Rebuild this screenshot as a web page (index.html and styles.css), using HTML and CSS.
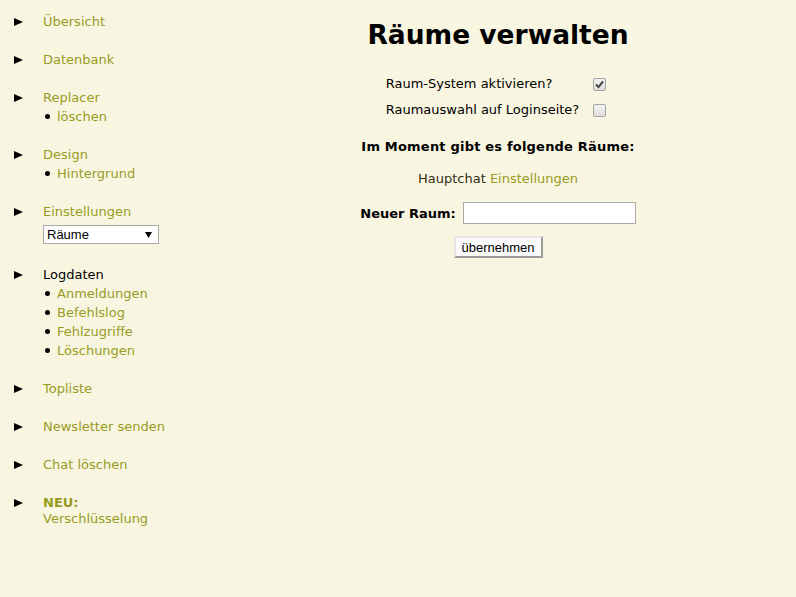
FILE: index.html
```html
<!DOCTYPE html>
<html lang="de">
<head>
    <meta charset="UTF-8">
    <title>Räume verwalten</title>
    <link rel="stylesheet" href="styles.css">
</head>
<body>
    <div class="layout">
        <ul class="nav">
            <li class="nav-item"><a href="#">Übersicht</a></li>
            <li class="nav-item"><a href="#">Datenbank</a></li>
            <li class="nav-item">
                <a href="#">Replacer</a>
                <ul class="sub">
                    <li><a href="#">löschen</a></li>
                </ul>
            </li>
            <li class="nav-item">
                <a href="#">Design</a>
                <ul class="sub">
                    <li><a href="#">Hintergrund</a></li>
                </ul>
            </li>
            <li class="nav-item">
                <a href="#">Einstellungen</a>
                <div class="nav-select">
                    <select>
                        <option>Räume</option>
                    </select>
                </div>
            </li>
            <li class="nav-item current">
                <span>Logdaten</span>
                <ul class="sub">
                    <li><a href="#">Anmeldungen</a></li>
                    <li><a href="#">Befehlslog</a></li>
                    <li><a href="#">Fehlzugriffe</a></li>
                    <li><a href="#">Löschungen</a></li>
                </ul>
            </li>
            <li class="nav-item"><a href="#">Topliste</a></li>
            <li class="nav-item"><a href="#">Newsletter senden</a></li>
            <li class="nav-item"><a href="#">Chat löschen</a></li>
            <li class="nav-item nav-item-new"><a href="#"><b>NEU:</b><br>Verschlüsselung</a></li>
        </ul>

        <div class="main">
            <h1>Räume verwalten</h1>

            <table class="options">
                <tr>
                    <td>Raum-System aktivieren?</td>
                    <td><input type="checkbox" checked></td>
                </tr>
                <tr>
                    <td>Raumauswahl auf Loginseite?</td>
                    <td><input type="checkbox"></td>
                </tr>
            </table>

            <p class="rooms-title">Im Moment gibt es folgende Räume:</p>
            <p class="rooms">Hauptchat <a href="#">Einstellungen</a></p>

            <form class="new-room">
                <div class="new-room-row">
                    <label for="raum">Neuer Raum:</label>
                    <input type="text" id="raum">
                </div>
                <button type="button">übernehmen</button>
            </form>
        </div>
    </div>
</body>
</html>
```

FILE: styles.css
```css
body {
    margin: 0;
    background: #f8f6e1;
    color: #000;
    font-family: "DejaVu Sans", Verdana, sans-serif;
    font-size: 13px;
}
a {
    color: #989b1f;
    text-decoration: none;
}
.layout {
    display: grid;
    grid-template-columns: 200px 1fr;
}

/* left menu */
.nav {
    list-style: none;
    margin: 0;
    padding: 12px 0 0 0;
    line-height: 19px;
}
.nav-item {
    position: relative;
    padding-left: 43px;
    margin-bottom: 19px;
}
.nav-item::before {
    content: "";
    position: absolute;
    left: 14px;
    top: 6px;
    border-left: 9px solid #000;
    border-top: 4px solid transparent;
    border-bottom: 4px solid transparent;
}
.nav-item.current > span {
    color: #000;
}
.nav-item-new {
    line-height: 16px;
    padding-top: 2px;
}
.nav-item-new::before {
    top: 6px;
}
.sub {
    list-style: none;
    margin: 0;
    padding: 0;
}
.sub li {
    position: relative;
    padding-left: 14px;
}
.sub li::before {
    content: "";
    position: absolute;
    left: 2px;
    top: 7px;
    width: 5px;
    height: 5px;
    border-radius: 50%;
    background: #000;
}
.nav-select {
    padding: 4px 0 2px 0;
    line-height: 0;
}
.nav-select select {
    appearance: none;
    -webkit-appearance: none;
    width: 116px;
    height: 19px;
    margin: 0;
    padding: 0 0 0 3px;
    border: 1px solid #a9a9a9;
    border-radius: 0;
    background: #fff url("data:image/svg+xml,%3Csvg xmlns='http://www.w3.org/2000/svg' width='7' height='6'%3E%3Cpath d='M0 0h7L3.5 6z' fill='%23000'/%3E%3C/svg%3E") no-repeat right 6px center;
    font-family: "Liberation Sans", Arial, sans-serif;
    font-size: 13px;
    color: #000;
}

/* content */
.main {
    text-align: center;
}
.main h1 {
    margin: 20px 0 20px 0;
    font-size: 26.5px;
    line-height: 30px;
}
.options {
    margin: 0 auto;
    border-collapse: collapse;
    text-align: left;
    position: relative;
    left: -2px;
}
.options td {
    height: 26px;
    padding: 0 10px 0 0;
}
.options td + td {
    padding: 0;
}
.options input {
    appearance: none;
    -webkit-appearance: none;
    width: 13px;
    height: 13px;
    margin: 3px 0 0 4px;
    vertical-align: top;
    border: 1px solid #a3a3a3;
    border-radius: 2px;
    background: linear-gradient(#f2f2f2, #dedede);
}
.options input:checked {
    background: url("data:image/svg+xml,%3Csvg xmlns='http://www.w3.org/2000/svg' width='11' height='11'%3E%3Cpath d='M2 5.5l2.5 2.6L9 2.5' fill='none' stroke='%23444' stroke-width='2'/%3E%3C/svg%3E") no-repeat center, linear-gradient(#f2f2f2, #dedede);
}
.rooms-title {
    margin: 15px 0 13px 0;
    font-weight: bold;
    letter-spacing: 0.2px;
    line-height: 19px;
}
.rooms {
    margin: 0 0 14px 0;
    line-height: 19px;
    color: #352e12;
}
.new-room {
    margin: 0;
}
.new-room-row {
    display: flex;
    justify-content: center;
    align-items: center;
    gap: 7px;
    margin-bottom: 12px;
}
.new-room-row label {
    font-weight: bold;
}
.new-room-row input {
    width: 173px;
    height: 22px;
    box-sizing: border-box;
    margin: 0;
    border: 1px solid #a9a9a9;
    background: #fff;
}
.new-room button {
    height: 22px;
    padding: 0 6px;
    margin: 0;
    border: 2px solid;
    border-color: #e6e6e6 #9a9a9a #9a9a9a #e6e6e6;
    background: #fbfbfb;
    font-family: "Liberation Sans", Arial, sans-serif;
    font-size: 13px;
    color: #000;
}
```
